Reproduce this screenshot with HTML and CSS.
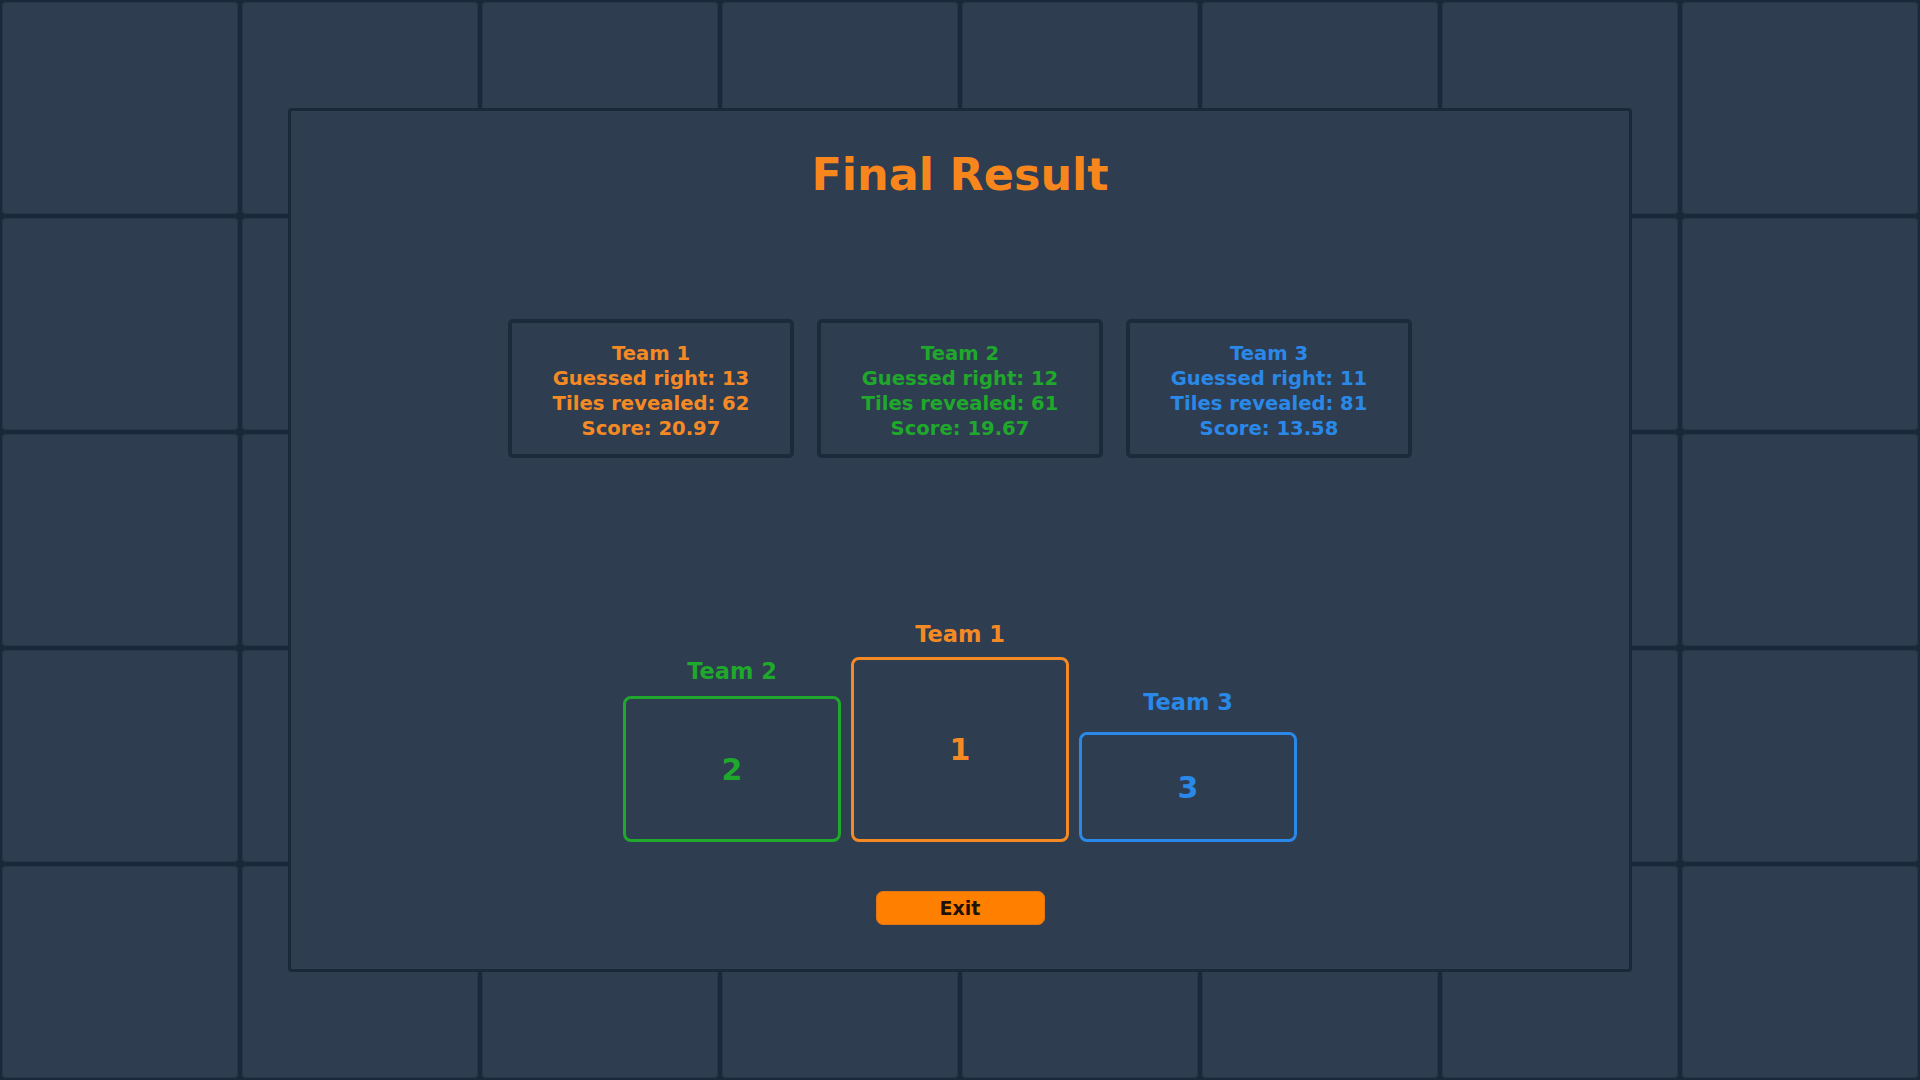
FILE: index.html
```html
<!DOCTYPE html>
<html lang="en">
<head>
<meta charset="utf-8">
<title>Final Result</title>
<link rel="stylesheet" href="styles.css">
</head>
<body>
<div class="board">
  <div class="tile"></div><div class="tile"></div><div class="tile"></div><div class="tile"></div>
  <div class="tile"></div><div class="tile"></div><div class="tile"></div><div class="tile"></div>
  <div class="tile"></div><div class="tile"></div><div class="tile"></div><div class="tile"></div>
  <div class="tile"></div><div class="tile"></div><div class="tile"></div><div class="tile"></div>
  <div class="tile"></div><div class="tile"></div><div class="tile"></div><div class="tile"></div>
  <div class="tile"></div><div class="tile"></div><div class="tile"></div><div class="tile"></div>
  <div class="tile"></div><div class="tile"></div><div class="tile"></div><div class="tile"></div>
  <div class="tile"></div><div class="tile"></div><div class="tile"></div><div class="tile"></div>
  <div class="tile"></div><div class="tile"></div><div class="tile"></div><div class="tile"></div>
  <div class="tile"></div><div class="tile"></div><div class="tile"></div><div class="tile"></div>
</div>

<div class="modal">
  <h1 class="title">Final Result</h1>

  <div class="stats">
    <div class="stat-card team-orange">
      <div>Team 1</div>
      <div>Guessed right: 13</div>
      <div>Tiles revealed: 62</div>
      <div>Score: 20.97</div>
    </div>
    <div class="stat-card team-green">
      <div>Team 2</div>
      <div>Guessed right: 12</div>
      <div>Tiles revealed: 61</div>
      <div>Score: 19.67</div>
    </div>
    <div class="stat-card team-blue">
      <div>Team 3</div>
      <div>Guessed right: 11</div>
      <div>Tiles revealed: 81</div>
      <div>Score: 13.58</div>
    </div>
  </div>

  <div class="podium">
    <div class="podium-col place-2 team-green">
      <div class="podium-label">Team 2</div>
      <div class="podium-box">2</div>
    </div>
    <div class="podium-col place-1 team-orange">
      <div class="podium-label">Team 1</div>
      <div class="podium-box">1</div>
    </div>
    <div class="podium-col place-3 team-blue">
      <div class="podium-label">Team 3</div>
      <div class="podium-box">3</div>
    </div>
  </div>

  <button class="exit-btn" type="button">Exit</button>
</div>
</body>
</html>
```

FILE: styles.css
```css
* {
  box-sizing: border-box;
}

html, body {
  margin: 0;
  padding: 0;
  width: 1920px;
  height: 1080px;
  overflow: hidden;
}

body {
  background: #1b283a;
  font-family: "DejaVu Sans", Verdana, sans-serif;
  font-weight: bold;
}

.board {
  display: grid;
  grid-template-columns: repeat(8, 1fr);
  grid-template-rows: repeat(5, 1fr);
  gap: 4px;
  padding: 2px;
  width: 1920px;
  height: 1080px;
}

.tile {
  background: #2e3d50;
  border-radius: 4px;
  box-shadow: inset 0 0 0 1px #27364a;
}

.modal {
  position: absolute;
  left: 288px;
  top: 108px;
  width: 1344px;
  height: 864px;
  background: #2e3d50;
  border: 3px solid #1b283a;
  border-radius: 4px;
  display: flex;
  flex-direction: column;
  align-items: center;
  padding-top: 38px;
}

.title {
  margin: 0;
  font-size: 44.5px;
  line-height: 52px;
  color: #f7861c;
  font-weight: bold;
}

.team-orange { color: #f58a25; }
.team-green { color: #1fa82b; }
.team-blue { color: #2a89e8; }

.stats {
  display: flex;
  gap: 23px;
  margin-top: 118px;
}

.stat-card {
  width: 286px;
  height: 139px;
  border: 4px solid #1c2a3c;
  border-radius: 5px;
  padding: 18px 0 0;
  text-align: center;
  font-size: 19.6px;
  line-height: 25px;
}

.podium {
  display: flex;
  align-items: flex-end;
  gap: 10px;
  margin-top: 163px;
}

.podium-col {
  display: flex;
  flex-direction: column;
  align-items: center;
  width: 218px;
}

.podium-label {
  font-size: 22.5px;
  line-height: 26px;
}

.podium-box {
  width: 218px;
  border: 3px solid currentColor;
  border-radius: 8px;
  display: flex;
  align-items: center;
  justify-content: center;
  font-size: 30px;
}

.place-1 .podium-label { margin-bottom: 10px; }
.place-1 .podium-box { height: 185px; }

.place-2 .podium-label { margin-bottom: 12px; }
.place-2 .podium-box { height: 146px; }

.place-3 .podium-label { margin-bottom: 17px; }
.place-3 .podium-box { height: 110px; }

.exit-btn {
  margin-top: 49px;
  width: 169px;
  height: 34px;
  background: #ff8000;
  border: 1px solid #e07418;
  border-radius: 7px;
  color: #1e1208;
  font-family: "DejaVu Sans", Verdana, sans-serif;
  font-weight: bold;
  font-size: 19px;
  padding: 0;
  cursor: pointer;
}
```
